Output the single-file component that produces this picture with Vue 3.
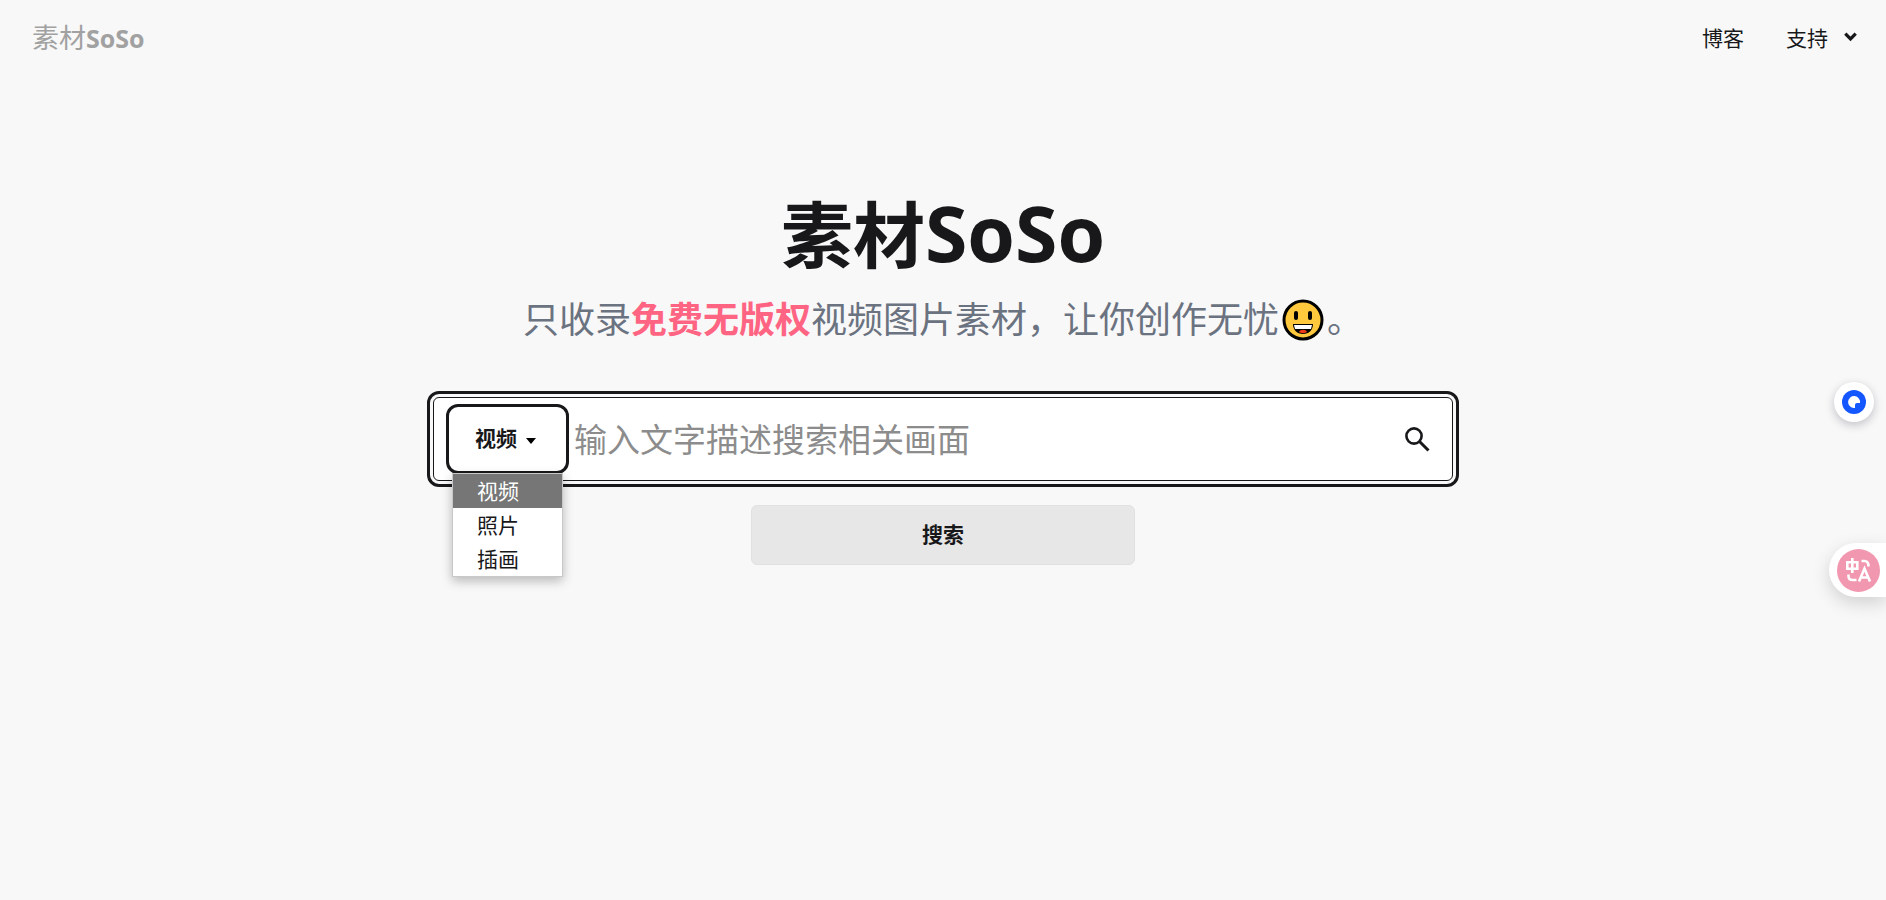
<script setup>
import { ref } from 'vue'

const kinds = ['视频', '照片', '插画']
const kind = ref('视频')
const query = ref('')
const listOpen = ref(true)

function pick(k) {
  kind.value = k
  listOpen.value = false
}
</script>

<template>
  <div class="page">
    <header class="bar">
      <a class="brand" href="#"><span class="brand-cn">素材</span>SoSo</a>
      <nav class="nav">
        <a href="#blog">博客</a>
        <a href="#support">
          支持
          <svg class="chevron" viewBox="0 0 12 10" aria-hidden="true">
            <path d="M1.200 2.300 6 7.200 10.800 2.300" fill="none" stroke="currentColor" stroke-width="3" />
          </svg>
        </a>
      </nav>
    </header>

    <main class="hero">
      <h1>素材<span class="latin">SoSo</span></h1>
      <p class="lead">
        <span>只收录<strong>免费无版权</strong>视频图片素材，让你创作无忧</span>
        <svg class="smile" viewBox="0 0 42 42" role="img" aria-label="笑脸">
          <circle cx="21" cy="21" r="19" fill="#ffc83d" stroke="#000" stroke-width="3" />
          <rect x="12" y="12" width="4" height="9" rx="2" />
          <rect x="26" y="12" width="4" height="9" rx="2" />
          <path d="M11 25h20c0 6-4 10-10 10s-10-4-10-10z" fill="#000" />
          <path d="M12 26h18l-1 4H13z" fill="#fff" />
          <path d="M17 33c1-3 7-3 8 0-2 1.500-6 1.500-8 0z" fill="#f03a17" />
        </svg>
        <span>。</span>
      </p>

      <form class="search" @submit.prevent>
        <div class="field">
          <div class="kind">
            <select v-model="kind" aria-label="素材类型" @mousedown.prevent="listOpen = !listOpen">
              <option v-for="k in kinds" :key="k">{{ k }}</option>
            </select>
            <svg class="caret" viewBox="0 0 10 6" aria-hidden="true"><path d="M0 0h10L5 6z" /></svg>
            <ul v-if="listOpen" class="menu" role="listbox" aria-label="素材类型">
              <li
                v-for="k in kinds"
                :key="k"
                role="option"
                :aria-selected="k === kind"
                :class="{ active: k === kind }"
                @click="pick(k)"
              >{{ k }}</li>
            </ul>
          </div>
          <input v-model="query" type="text" aria-label="搜索内容" placeholder="输入文字描述搜索相关画面" />
          <button class="find" type="submit" aria-label="查找">
            <svg viewBox="0 0 26 26" aria-hidden="true">
              <g fill="none" stroke="currentColor" stroke-width="2.600">
                <circle cx="10" cy="10" r="7.600" />
                <path d="M15.500 15.500 24.500 24.500" stroke-width="3" />
              </g>
            </svg>
          </button>
        </div>
        <button class="go" type="submit">搜索</button>
      </form>
    </main>

    <button class="float assistant" type="button" aria-label="助手">
      <svg viewBox="0 0 24 24" aria-hidden="true">
        <circle cx="12" cy="12" r="12" fill="#1456ff" />
        <path d="M12 18A6 6 0 1 1 18 13H15Q13 13 13 15V18z" fill="#fff" />
      </svg>
    </button>
    <button class="float translate" type="button" aria-label="翻译">
      <svg viewBox="0 0 43 43" aria-hidden="true">
        <circle cx="21.500" cy="21.500" r="21.500" fill="#f197b0" />
        <g fill="none" stroke="#fff" stroke-width="2.600">
          <path d="M10.300 13.300h10v6.400h-10zM15.300 9v15" />
          <path d="M24.500 12h3q4 0 4 5.500" />
          <path d="M11.500 25.500v1.500q0 4 4 4h4" />
          <path d="M22 32.500 27.500 19.500 33 32.500M24 28.500h7" />
        </g>
      </svg>
    </button>
  </div>
</template>

<style>
body {
  margin: 0;
  background: #f8f8f8;
}
</style>

<style scoped>
.page {
  min-height: 100vh;
  background: #f8f8f8;
  color: #18181b;
  font-family: "Open Sans", "Noto Sans CJK SC", sans-serif;
  font-size: 21px;
}
.page * {
  box-sizing: border-box;
}
a {
  color: inherit;
  text-decoration: none;
}
button,
input,
select {
  font: inherit;
  color: inherit;
  margin: 0;
  border: 0;
  background: none;
}
.bar {
  display: flex;
  align-items: center;
  justify-content: space-between;
  height: 77px;
  padding: 0 29px 4px 32px;
}
.brand {
  color: #a1a1a1;
  font-size: 25px;
  font-weight: 700;
}
.brand-cn {
  font-family: "Liberation Serif", "Noto Sans CJK SC", serif;
  font-size: 27px;
  font-weight: 400;
}
.nav {
  display: flex;
  gap: 42px;
}
.nav a {
  display: flex;
  align-items: center;
}
.chevron {
  width: 13px;
  height: 11px;
  margin-left: 16px;
}
.hero {
  display: flex;
  flex-direction: column;
  align-items: center;
  padding: 116px 24px 0;
}
h1 {
  margin: 0;
  font-size: 72px;
  line-height: 80px;
  font-weight: 700;
}
.latin {
  font-size: 77px;
}
.lead {
  display: flex;
  align-items: center;
  margin: 22px 0 0;
  color: #6b7280;
  font-size: 36px;
  line-height: 48px;
}
.lead strong {
  color: #ff6583;
}
.smile {
  width: 42px;
  height: 42px;
  margin: 0 3px;
}
.search {
  display: flex;
  flex-direction: column;
  align-items: center;
  gap: 24px;
  width: 100%;
  max-width: 1020px;
  margin-top: 53px;
}
.field {
  display: flex;
  align-items: center;
  width: 100%;
  height: 84px;
  padding: 0 12px;
  border: 1px solid #18181b;
  border-radius: 6px;
  outline: 3px solid #18181b;
  outline-offset: 3px;
  background: #fff;
}
.kind {
  position: relative;
  flex: none;
  width: 123px;
}
.kind select {
  display: block;
  width: 100%;
  height: 70px;
  padding: 0 26px 2px;
  border: 3px solid #18181b;
  border-radius: 12px;
  appearance: none;
  background: #fff;
  font-weight: 700;
}
.caret {
  position: absolute;
  right: 33px;
  top: 34px;
  width: 10px;
  height: 6px;
}
.menu {
  position: absolute;
  top: 69px;
  left: 6px;
  width: 111px;
  margin: 0;
  padding: 0;
  border: 1px solid #c8c8c8;
  background: #fff;
  box-shadow: 0 4px 10px rgba(0, 0, 0, 0.26);
  list-style: none;
}
.menu li {
  padding-left: 24px;
  line-height: 34px;
}
.menu .active {
  background: #767676;
  color: #fff;
}
.field input {
  flex: 1;
  min-width: 0;
  height: 60px;
  padding: 0 5px;
  outline: 0;
  font-size: 33px;
}
.field input::placeholder {
  color: #8c8c8c;
  opacity: 1;
}
.find {
  display: flex;
  padding: 10px;
}
.find svg {
  width: 26px;
  height: 26px;
}
.go {
  width: 384px;
  height: 60px;
  padding: 0 0 4px;
  border: 1px solid #e1e1e1;
  border-radius: 6px;
  background: #e7e7e7;
  font-weight: 700;
}
.float {
  position: fixed;
  display: flex;
  align-items: center;
  background: #fff;
}
.assistant {
  top: 382px;
  right: 12px;
  justify-content: center;
  width: 40px;
  height: 40px;
  padding: 0;
  border-radius: 50%;
  box-shadow: 0 3px 10px rgba(20, 20, 50, 0.24);
}
.assistant svg {
  width: 24px;
  height: 24px;
}
.translate {
  top: 543px;
  right: 0;
  width: 57px;
  height: 54px;
  padding: 0 0 0 8px;
  border-radius: 27px 0 0 27px;
  box-shadow: 0 6px 18px rgba(0, 0, 0, 0.16);
}
.translate svg {
  width: 43px;
  height: 43px;
}
</style>
